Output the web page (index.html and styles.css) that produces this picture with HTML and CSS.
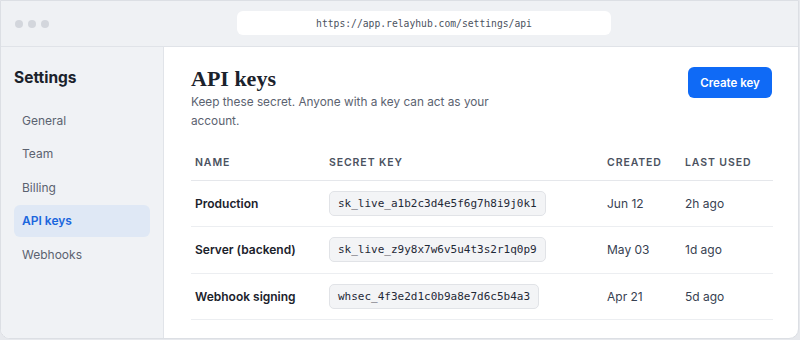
FILE: index.html
```html
<!DOCTYPE html>
<html lang="en">
<head>
<meta charset="utf-8">
<title>API keys</title>
<link rel="stylesheet" href="styles.css">
</head>
<body>
<div class="window">
  <div class="titlebar">
    <div class="dots"><span class="dot"></span><span class="dot"></span><span class="dot"></span></div>
    <div class="url">https://app.relayhub.com/settings/api</div>
  </div>
  <div class="body">
    <aside class="sidebar">
      <h2 class="side-title">Settings</h2>
      <nav class="nav">
        <a class="nav-item">General</a>
        <a class="nav-item">Team</a>
        <a class="nav-item">Billing</a>
        <a class="nav-item active">API keys</a>
        <a class="nav-item">Webhooks</a>
      </nav>
    </aside>
    <main class="main">
      <div class="head">
        <div class="head-text">
          <h1 class="title">API keys</h1>
          <p class="sub">Keep these secret. Anyone with a key can act as your account.</p>
        </div>
        <button class="btn">Create key</button>
      </div>
      <table class="keys">
        <colgroup>
          <col class="c-name"><col class="c-key"><col class="c-created"><col class="c-used">
        </colgroup>
        <thead>
          <tr><th>Name</th><th class="flush">Secret key</th><th>Created</th><th>Last used</th></tr>
        </thead>
        <tbody>
          <tr><td class="name">Production</td><td class="flush"><code class="chip">sk_live_a1b2c3d4e5f6g7h8i9j0k1</code></td><td>Jun 12</td><td>2h ago</td></tr>
          <tr><td class="name">Server (backend)</td><td class="flush"><code class="chip">sk_live_z9y8x7w6v5u4t3s2r1q0p9</code></td><td>May 03</td><td>1d ago</td></tr>
          <tr><td class="name">Webhook signing</td><td class="flush"><code class="chip">whsec_4f3e2d1c0b9a8e7d6c5b4a3</code></td><td>Apr 21</td><td>5d ago</td></tr>
        </tbody>
      </table>
    </main>
  </div>
</div>
</body>
</html>
```
FILE: styles.css
```css
* { box-sizing: border-box; }
html, body { margin: 0; padding: 0; }
body {
  width: 800px;
  height: 340px;
  background: #e7e9ed;
  font-family: Inter, "Noto Sans", sans-serif;
  color: #1f2937;
  overflow: hidden;
}
.window {
  width: 799px;
  height: 339px;
  border: 1px solid #dcdfe4;
  border-radius: 0 0 10px 10px;
  background: #ffffff;
  overflow: hidden;
  display: flex;
  flex-direction: column;
}
.titlebar {
  height: 46px;
  flex: none;
  background: #eff1f4;
  border-bottom: 1px solid #e0e3e8;
  display: flex;
  align-items: center;
  position: relative;
  padding-left: 14px;
}
.dots { display: flex; gap: 5px; }
.dot { width: 8px; height: 8px; border-radius: 50%; background: #d3d6dc; }
.url {
  position: absolute;
  left: 236px;
  top: 10px;
  width: 374px;
  height: 24px;
  background: #ffffff;
  border-radius: 6px;
  font-family: "DejaVu Sans Mono", monospace;
  font-size: 9.7px;
  color: #4b5260;
  display: flex;
  align-items: center;
  justify-content: center;
}
.body { flex: 1; display: flex; min-height: 0; }
.sidebar {
  width: 163px;
  flex: none;
  background: #f0f2f5;
  border-right: 1px solid #e1e4e9;
  padding: 20px 13px 0 13px;
}
.side-title {
  margin: 0;
  font-size: 15.5px;
  line-height: 22px;
  font-weight: 700;
  color: #1b222c;
}
.nav { margin-top: 15px; display: flex; flex-direction: column; gap: 1.5px; }
.nav-item {
  height: 32px;
  display: flex;
  align-items: center;
  padding-left: 8px;
  border-radius: 6px;
  font-size: 12px;
  color: #5b6270;
}
.nav-item.active {
  background: #dfe8f5;
  color: #1a66dd;
  font-weight: 600;
}
.main { flex: 1; padding: 19px 26px 0 27px; min-width: 0; }
.head { display: flex; justify-content: space-between; align-items: flex-start; }
.title {
  margin: 0;
  font-family: "Liberation Serif", serif;
  font-size: 22px;
  line-height: 26px;
  font-weight: 700;
  color: #1b222c;
}
.sub {
  margin: 1px 0 0;
  max-width: 310px;
  font-size: 11.8px;
  line-height: 19px;
  color: #5b6270;
}
.btn {
  margin-top: 1px;
  width: 84px;
  height: 31px;
  border: none;
  border-radius: 6px;
  background: #0f6af6;
  color: #ffffff;
  font-family: Inter, sans-serif;
  font-size: 11.5px;
  font-weight: 600;
}
.keys {
  margin-top: 15px;
  width: 582px;
  border-collapse: collapse;
  table-layout: fixed;
}
.c-name { width: 138px; }
.c-key { width: 274px; }
.c-created { width: 78px; }
.c-used { width: 92px; }
th {
  height: 34px;
  text-align: left;
  padding: 0 4px;
  font-size: 10.5px;
  font-weight: 600;
  letter-spacing: 0.9px;
  text-transform: uppercase;
  color: #4b5260;
  border-bottom: 1px solid #e5e7eb;
}
td {
  height: 46.5px;
  padding: 0 4px;
  font-size: 12px;
  color: #374151;
  border-bottom: 1px solid #eceef1;
  vertical-align: middle;
}
th.flush, td.flush { padding-left: 0; }
td.name { font-weight: 600; color: #1b222c; }
.chip {
  display: inline-block;
  height: 25px;
  line-height: 23px;
  padding: 0 8px;
  background: #f3f4f6;
  border: 1px solid #e1e3e7;
  border-radius: 5px;
  font-family: "DejaVu Sans Mono", monospace;
  font-size: 11px;
  color: #1f2937;
}
```
